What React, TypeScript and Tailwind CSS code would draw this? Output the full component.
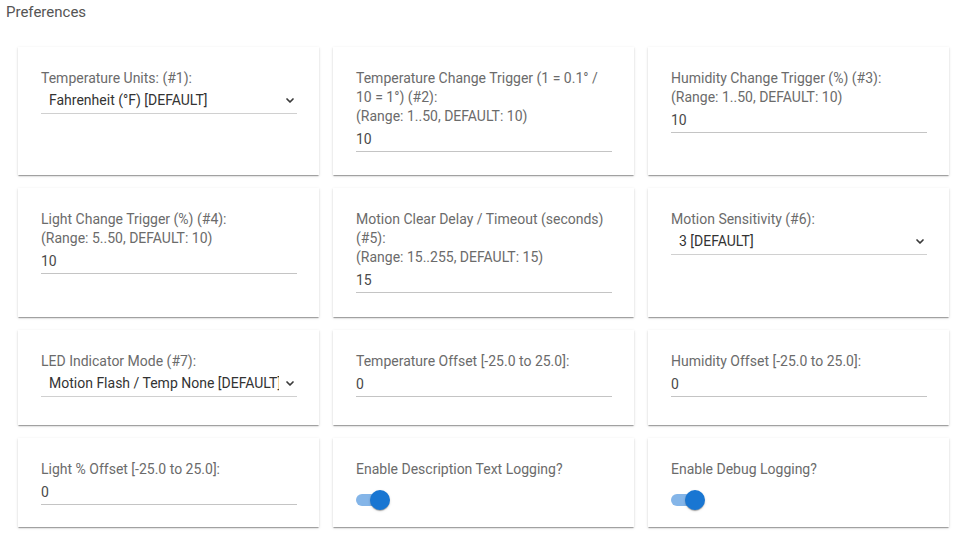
import React from "react";

const font = { fontFamily: "Roboto, 'Noto Sans', Arial, sans-serif" };

function Chevron() {
  return (
    <svg width="10" height="7" viewBox="0 0 10 7" className="shrink-0">
      <path d="M2 2 L5 5 L8 2" fill="none" stroke="#3a3a3a" strokeWidth="1.7" strokeLinecap="round" strokeLinejoin="round" />
    </svg>
  );
}

function Label({ lines }: { lines: string[] }) {
  return (
    <div className="text-[14px] leading-[19px] text-[#6b6b6b]">
      {lines.map((l, i) => (
        <div key={i} className="whitespace-nowrap">{l}</div>
      ))}
    </div>
  );
}

function Input({ value }: { value: string }) {
  return (
    <div className="w-[256px] pt-[4px] pb-[2px] border-b border-[#c4c4c4] text-[14px] leading-[19px] text-[#4a4a4a]">
      {value}
    </div>
  );
}

function Select({ value }: { value: string }) {
  return (
    <div className="w-[256px] pt-[3px] pb-[3px] border-b border-[#d0d0d0] flex items-center text-[14px] leading-[19px] text-[#333]">
      <div className="ml-[8px] w-[230px] overflow-hidden whitespace-nowrap">{value}</div>
      <div className="ml-[6px] flex items-center">
        <Chevron />
      </div>
    </div>
  );
}

function Toggle() {
  return (
    <div className="mt-[11px] h-[20px] flex items-center">
      <div className="relative w-[31px] h-[12px] rounded-full bg-[#84b5e8]">
        <div className="absolute right-[-3px] top-[-4px] w-[20px] h-[20px] rounded-full bg-[#1976d2] shadow-[0_2px_1px_-1px_rgba(0,0,0,0.2),0_1px_1px_0_rgba(0,0,0,0.14),0_1px_3px_0_rgba(0,0,0,0.12)]" />
      </div>
    </div>
  );
}

function Card({ children }: { children: React.ReactNode }) {
  return (
    <div className="bg-white pt-[22px] px-[23px] shadow-[0_2px_1px_-1px_rgba(0,0,0,0.2),0_1px_1px_0_rgba(0,0,0,0.14),0_1px_3px_0_rgba(0,0,0,0.12)]">
      {children}
    </div>
  );
}

export default function App() {
  return (
    <div className="w-[961px] h-[540px] bg-white overflow-hidden" style={font}>
      <div className="pl-[6px] pt-[3px] text-[15px] leading-[19px] text-[#555]">Preferences</div>
      <div className="mt-[25px] ml-[18px] w-[931px] grid grid-cols-3 gap-x-[14px] gap-y-[13px] grid-rows-[128px_129px_95px_89px]">
        <Card>
          <Label lines={["Temperature Units: (#1):"]} />
          <Select value="Fahrenheit (°F) [DEFAULT]" />
        </Card>
        <Card>
          <Label lines={["Temperature Change Trigger (1 = 0.1° /", "10 = 1°) (#2):", "(Range: 1..50, DEFAULT: 10)"]} />
          <Input value="10" />
        </Card>
        <Card>
          <Label lines={["Humidity Change Trigger (%) (#3):", "(Range: 1..50, DEFAULT: 10)"]} />
          <Input value="10" />
        </Card>

        <Card>
          <Label lines={["Light Change Trigger (%) (#4):", "(Range: 5..50, DEFAULT: 10)"]} />
          <Input value="10" />
        </Card>
        <Card>
          <Label lines={["Motion Clear Delay / Timeout (seconds)", "(#5):", "(Range: 15..255, DEFAULT: 15)"]} />
          <Input value="15" />
        </Card>
        <Card>
          <Label lines={["Motion Sensitivity (#6):"]} />
          <Select value="3 [DEFAULT]" />
        </Card>

        <Card>
          <Label lines={["LED Indicator Mode (#7):"]} />
          <Select value="Motion Flash / Temp None [DEFAULT]" />
        </Card>
        <Card>
          <Label lines={["Temperature Offset [-25.0 to 25.0]:"]} />
          <Input value="0" />
        </Card>
        <Card>
          <Label lines={["Humidity Offset [-25.0 to 25.0]:"]} />
          <Input value="0" />
        </Card>

        <Card>
          <Label lines={["Light % Offset [-25.0 to 25.0]:"]} />
          <Input value="0" />
        </Card>
        <Card>
          <Label lines={["Enable Description Text Logging?"]} />
          <Toggle />
        </Card>
        <Card>
          <Label lines={["Enable Debug Logging?"]} />
          <Toggle />
        </Card>
      </div>
    </div>
  );
}
